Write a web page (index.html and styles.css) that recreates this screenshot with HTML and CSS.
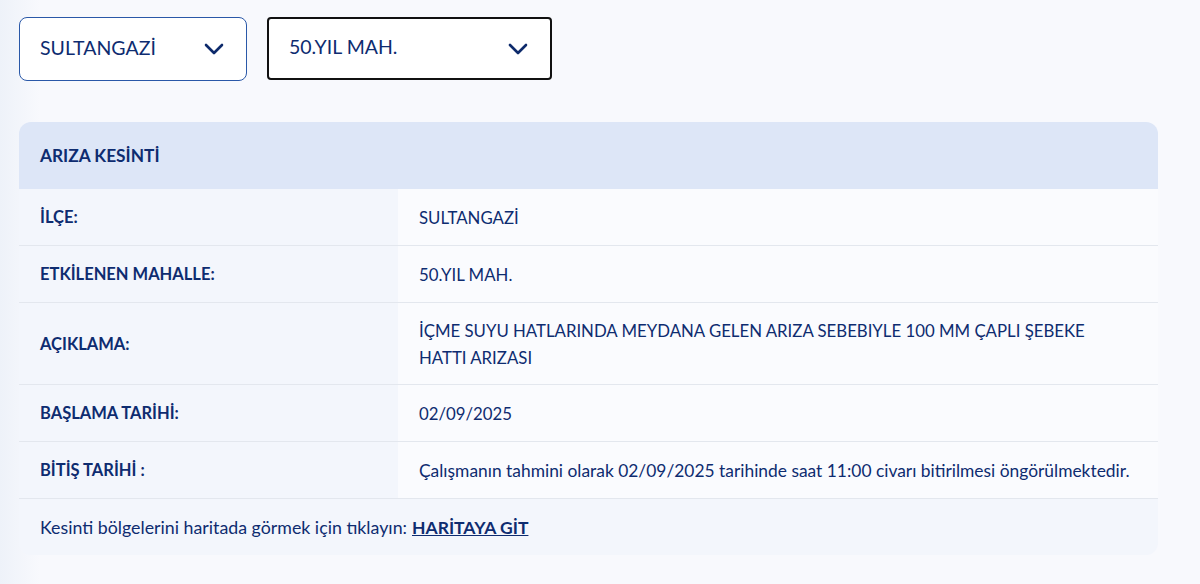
FILE: index.html
```html
<!DOCTYPE html>
<html lang="tr">
<head>
    <meta charset="UTF-8">
    <meta name="viewport" content="width=device-width, initial-scale=1.0">
    <title>Arıza Kesinti</title>
    <link rel="stylesheet" href="styles.css">
</head>
<body>
    <!-- ilçe / mahalle seçimi -->
    <div class="filters">
        <div class="select select-district">
            <span>SULTANGAZİ</span>
            <svg width="20" height="12" viewBox="0 0 20 12"><path d="M2 2 L10 10 L18 2" fill="none" stroke="#0d2a6b" stroke-width="2.6" stroke-linecap="round" stroke-linejoin="round"/></svg>
        </div>
        <div class="select select-hood">
            <span>50.YIL MAH.</span>
            <svg width="20" height="12" viewBox="0 0 20 12"><path d="M2 2 L10 10 L18 2" fill="none" stroke="#0d2a6b" stroke-width="2.6" stroke-linecap="round" stroke-linejoin="round"/></svg>
        </div>
    </div>

    <!-- kesinti kartı -->
    <div class="outage-card">
        <div class="card-head">ARIZA KESİNTİ</div>
        <div class="row">
            <div class="label">İLÇE:</div>
            <div class="value">SULTANGAZİ</div>
        </div>
        <div class="row">
            <div class="label">ETKİLENEN MAHALLE:</div>
            <div class="value">50.YIL MAH.</div>
        </div>
        <div class="row row-tall">
            <div class="label">AÇIKLAMA:</div>
            <div class="value">İÇME SUYU HATLARINDA MEYDANA GELEN ARIZA SEBEBIYLE 100 MM ÇAPLI ŞEBEKE<br>HATTI ARIZASI</div>
        </div>
        <div class="row">
            <div class="label">BAŞLAMA TARİHİ:</div>
            <div class="value">02/09/2025</div>
        </div>
        <div class="row">
            <div class="label">BİTİŞ TARİHİ :</div>
            <div class="value value-text">Çalışmanın tahmini olarak 02/09/2025 tarihinde saat 11:00 civarı bitirilmesi öngörülmektedir.</div>
        </div>
        <div class="card-foot">
            Kesinti bölgelerini haritada görmek için tıklayın: <a href="#">HARİTAYA GİT</a>
        </div>
    </div>
</body>
</html>
```

FILE: styles.css
```css
body {
    margin: 0;
    padding: 17px 42px 0 19px;
    font-family: Lato, "Noto Sans", sans-serif;
    color: #0e2c70;
    background: linear-gradient(to right, #eef2f9 0, #f8f9fd 40px, #f8f9fd 100%);
    min-height: 584px;
    box-sizing: border-box;
}

.filters {
    display: flex;
    gap: 20px;
    margin-bottom: 41px;
}

.select {
    display: flex;
    align-items: center;
    justify-content: space-between;
    background: #fff;
    box-sizing: border-box;
    font-size: 19.5px;
    color: #0e2c70;
}

.select span {
    margin-top: -4px;
}

.select-district {
    width: 228px;
    height: 64px;
    border: 1.5px solid #2a58a8;
    border-radius: 8px;
    padding: 0 22px 0 20px;
}

.select-hood {
    width: 285px;
    height: 63px;
    border: 2px solid #111;
    border-radius: 4px;
    padding: 0 22px 0 20px;
}

.outage-card {
    width: 1139px;
    border-radius: 12px;
    overflow: hidden;
    background: #f3f6fc;
}

.card-head {
    height: 67px;
    background: #dde6f7;
    display: flex;
    align-items: center;
    padding-left: 21px;
    font-weight: bold;
    font-size: 17.3px;
}

.row {
    display: grid;
    grid-template-columns: 379px 1fr;
    height: 57px;
    border-bottom: 1px solid #e3e7ee;
    box-sizing: border-box;
}

.row-tall {
    height: 82px;
}

.label {
    background: #f3f6fc;
    display: flex;
    align-items: center;
    padding-left: 21px;
    font-weight: bold;
    font-size: 16.5px;
}

.value {
    background: #fafbfe;
    display: flex;
    align-items: center;
    padding-left: 21px;
    font-size: 16.8px;
    line-height: 27px;
}

.value-text {
    font-size: 17.4px;
}

.card-foot {
    height: 56px;
    display: flex;
    align-items: center;
    padding-left: 21px;
    font-size: 17.8px;
    gap: 5px;
}

.card-foot a {
    color: #0e2c70;
    font-weight: bold;
    font-size: 17.5px;
    text-decoration: underline;
}
```
